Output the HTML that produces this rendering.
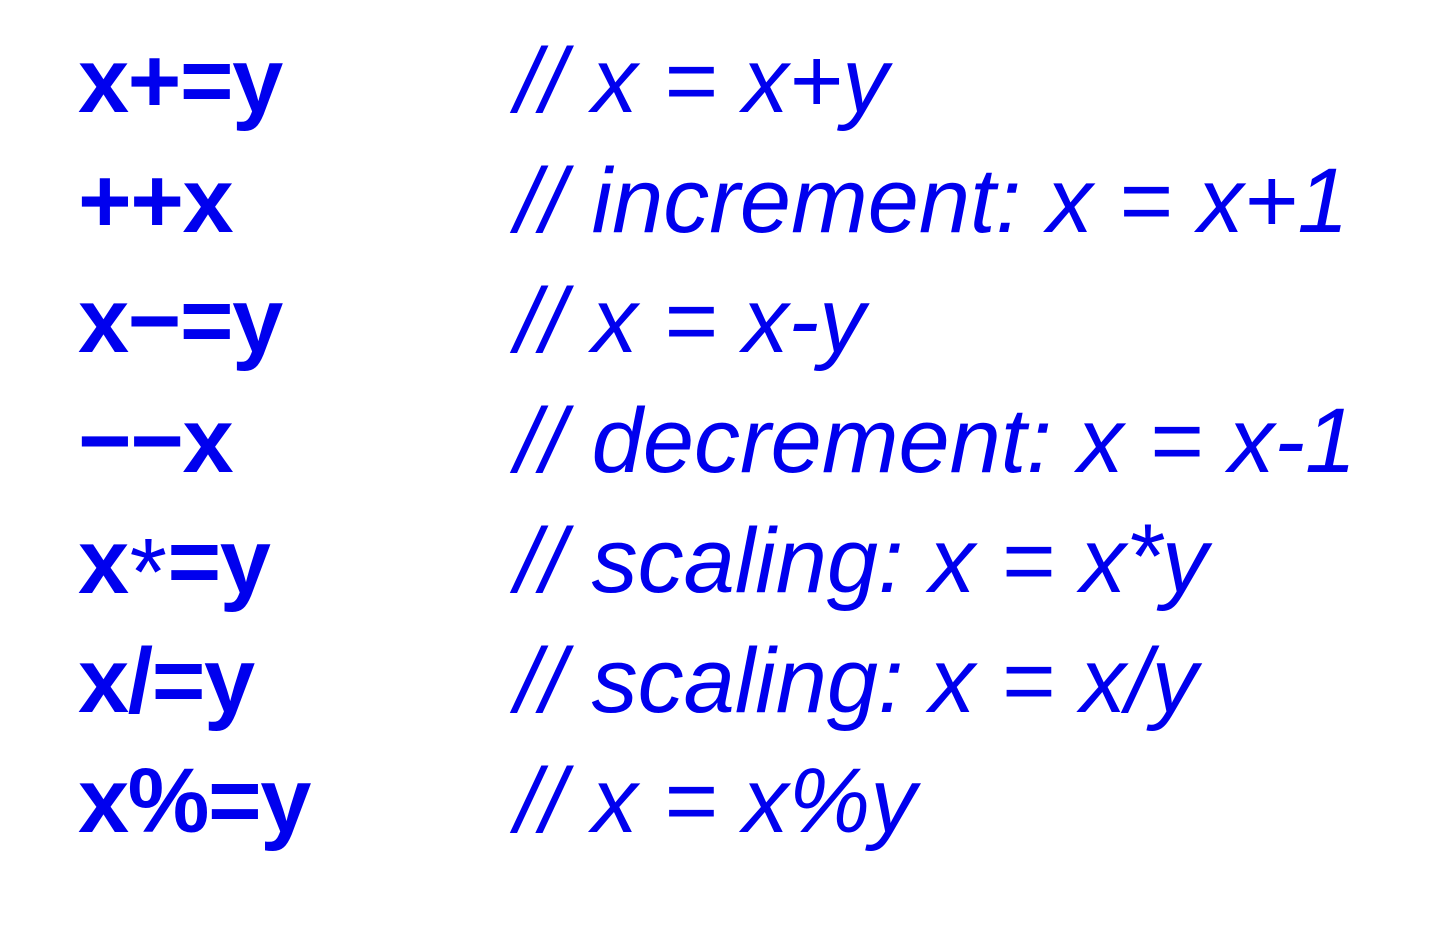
<!DOCTYPE html>
<html><head><meta charset="utf-8"><style>
html,body{margin:0;padding:0;background:#fff;width:1448px;height:932px;overflow:hidden;}
.r{position:absolute;font-family:"Liberation Sans",Arial,sans-serif;font-size:92px;line-height:92px;color:#0000ee;white-space:pre;}
.b{left:78px;font-weight:bold;letter-spacing:-1.5px;}
.i{left:515px;font-style:italic;}
.ast{font-weight:normal;font-size:96px;position:relative;top:12px;margin:0 2px;}
</style></head><body>
<div class="r b" style="top:35px">x+=y</div>
<div class="r i" style="top:35px">// x = x+y</div>
<div class="r b" style="top:155px">++x</div>
<div class="r i" style="top:155px">// increment: x = x+1</div>
<div class="r b" style="top:275px">x−=y</div>
<div class="r i" style="top:275px">// x = x-y</div>
<div class="r b" style="top:395px">−−x</div>
<div class="r i" style="top:395px">// decrement: x = x-1</div>
<div class="r b" style="top:515px">x<span class="ast">*</span>=y</div>
<div class="r i" style="top:515px">// scaling: x = x<span style="position:relative;top:-4px">*</span>y</div>
<div class="r b" style="top:635px">x/=y</div>
<div class="r i" style="top:635px">// scaling: x = x/y</div>
<div class="r b" style="top:755px">x%=y</div>
<div class="r i" style="top:755px">// x = x%y</div>
</body></html>
